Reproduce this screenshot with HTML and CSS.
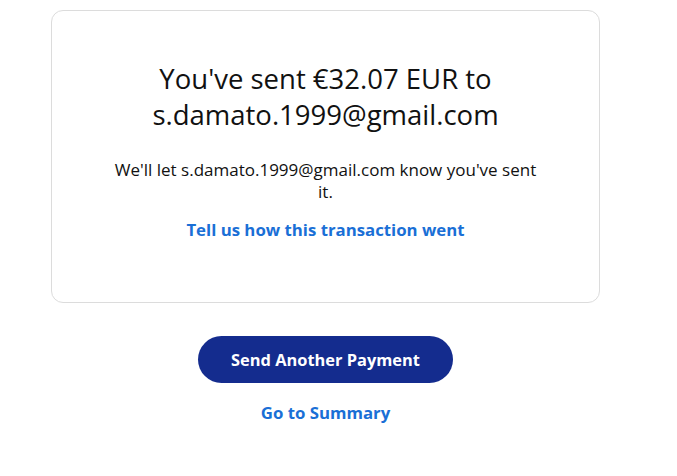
FILE: index.html
```html
<!DOCTYPE html>
<html lang="en">
<head>
<meta charset="utf-8">
<title>Payment sent</title>
<link rel="stylesheet" href="styles.css">
</head>
<body>
<main class="page">
  <section class="card">
    <h1 class="title">You've sent €32.07 EUR to s.damato.1999@gmail.com</h1>
    <p class="note">We'll let s.damato.1999@gmail.com know you've sent it.</p>
    <a class="link" href="#">Tell us how this transaction went</a>
  </section>
  <div class="actions">
    <button class="primary" type="button">Send Another Payment</button>
    <a class="link" href="#">Go to Summary</a>
  </div>
</main>
</body>
</html>
```
FILE: styles.css
```css
html, body {
  margin: 0;
  padding: 0;
  background: #ffffff;
}
body {
  font-family: "Open Sans", "Liberation Sans", sans-serif;
  color: #111111;
}
.page {
  width: 549px;
  margin: 10px 0 0 51px;
  display: flex;
  flex-direction: column;
  align-items: center;
}
.card {
  box-sizing: border-box;
  width: 549px;
  height: 293px;
  border: 1px solid #dcdcdc;
  border-radius: 12px;
  padding: 50px 40px 0;
  display: flex;
  flex-direction: column;
  align-items: center;
  text-align: center;
}
.title {
  margin: 0;
  width: 380px;
  font-size: 27.5px;
  line-height: 36px;
  font-weight: 400;
  color: #111111;
}
.note {
  margin: 26px 0 0;
  width: 436px;
  font-size: 17px;
  line-height: 22px;
  color: #111111;
}
.link {
  display: block;
  font-size: 16.8px;
  line-height: 22px;
  font-weight: 700;
  color: #1a6fd6;
  text-decoration: none;
}
.card .link {
  margin-top: 16px;
}
.actions {
  margin-top: 33px;
  display: flex;
  flex-direction: column;
  align-items: center;
  gap: 19px;
}
.primary {
  width: 255px;
  height: 47px;
  border: none;
  border-radius: 24px;
  background: #142c8e;
  color: #ffffff;
  font-family: inherit;
  font-size: 16.4px;
  font-weight: 700;
  cursor: pointer;
}
```
